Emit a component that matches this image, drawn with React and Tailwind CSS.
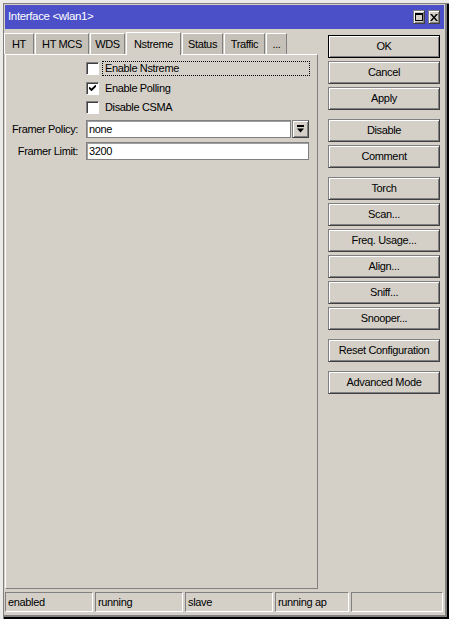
import React, { useState } from 'react';

const font = "font-['Liberation_Sans',Arial,sans-serif]";
const raised = 'border border-t-[#808080] border-l-[#808080] border-b-[#404040] border-r-[#404040] shadow-[inset_1px_1px_#ffffff,inset_-1px_-1px_#808080]';
const sunken = 'border border-t-[#808080] border-l-[#808080] border-b-[#ffffff] border-r-[#ffffff]';

const tabs = [
  { label: 'HT', w: 'w-[30px]' },
  { label: 'HT MCS', w: 'w-[54px]' },
  { label: 'WDS', w: 'w-[35px]' },
  { label: 'Nstreme', w: 'w-[55px]' },
  { label: 'Status', w: 'w-[41px]' },
  { label: 'Traffic', w: 'w-[41px]' },
  { label: '...', w: 'w-[21px]' },
];

const buttonGroups = [
  ['OK', 'Cancel', 'Apply'],
  ['Disable', 'Comment'],
  ['Torch', 'Scan...', 'Freq. Usage...', 'Align...', 'Sniff...', 'Snooper...'],
  ['Reset Configuration'],
  ['Advanced Mode'],
];

const statusCells = [
  { text: 'enabled', w: 'w-[88px]' },
  { text: 'running', w: 'w-[88px]' },
  { text: 'slave', w: 'w-[88px]' },
  { text: 'running ap', w: 'w-[74px]' },
  { text: '', w: 'w-[92px]' },
];

const TitleBar = () => (
  <div className="h-[24px] bg-[#4b50c9] flex items-center pl-[3px] pr-[4px] text-white text-[11.5px]">
    <span className="flex-1">{'Interface <wlan1>'}</span>
    <div className="flex gap-[3px]">
      <div className={`w-[12px] h-[14px] bg-[#d4d0c8] flex items-center justify-center ${raised}`}>
        <svg width="8" height="8" viewBox="0 0 8 8">
          <rect x="0.5" y="0.5" width="7" height="7" fill="none" stroke="#000" />
          <rect x="0" y="0" width="8" height="2" fill="#000" />
        </svg>
      </div>
      <div className={`w-[12px] h-[14px] bg-[#d4d0c8] flex items-center justify-center ${raised}`}>
        <svg width="8" height="7" viewBox="0 0 8 7">
          <path d="M0 0h2l2 2.5 2-2.5h2L5 3.5 8 7H6L4 4.5 2 7H0l3-3.5z" fill="#000" />
        </svg>
      </div>
    </div>
  </div>
);

const Checkbox = ({ checked, label, focused }) => (
  <div className="h-[15px] flex items-center pl-[80px]">
    <div className="w-[13px] h-[13px] bg-white border border-t-[#808080] border-l-[#808080] border-b-[#ffffff] border-r-[#ffffff] shadow-[inset_1px_1px_#404040] flex items-center justify-center">
      {checked && (
        <svg width="7" height="7" viewBox="0 0 7 7">
          <path d="M0 2.5l2.5 2.5L7 0.5" fill="none" stroke="#000" strokeWidth="1.8" />
        </svg>
      )}
    </div>
    <div
      className={`ml-[3px] mr-[7px] flex-1 h-[15px] flex items-center pl-[2px] border ${
        focused ? 'border-dotted border-black' : 'border-transparent'
      }`}
    >
      {label}
    </div>
  </div>
);

const Field = ({ label, value, dropdown }) => (
  <div className="flex items-center h-[18px] pr-[8px]">
    <div className="w-[72px] text-right">{label}</div>
    <div className="ml-[8px] flex-1 h-[18px] bg-white flex items-center pl-[2px] border border-[#808080] shadow-[inset_1px_1px_#a0a0a0]">
      {value}
    </div>
    {dropdown && (
      <div className={`ml-[1px] w-[17px] h-[18px] bg-[#d4d0c8] flex items-center justify-center ${raised}`}>
        <svg width="7" height="8" viewBox="0 0 7 8">
          <rect x="0" y="0" width="7" height="2" fill="#000" />
          <path d="M0 3.5h7L3.5 7.5z" fill="#000" />
        </svg>
      </div>
    )}
  </div>
);

const App = () => {
  const [active] = useState('Nstreme');

  return (
    <div
      className={`w-[449px] h-[619px] bg-[#d4d0c8] ${font} text-[11px] tracking-[-0.35px] text-black flex flex-col pt-[5px] pl-[5px] pr-[5px] pb-[7px] shadow-[inset_3px_3px_#ecebe8,inset_4px_4px_#808080,inset_-2px_-2px_#000000,inset_-4px_-4px_#808080]`}
    >
      <TitleBar />

      <div className="flex flex-1 min-h-0">
        {/* tabs + page */}
        <div className="w-[313px] flex flex-col pt-[3px]">
          <div className="h-[22px] flex items-end gap-[1px] -ml-[1px]">
            {tabs.map((t) =>
              t.label === active ? (
                <div
                  key={t.label}
                  className={`${t.w} h-[23px] -mb-[1px] relative z-10 bg-[#d4d0c8] flex items-start justify-center pt-[3px] border-t border-l border-white border-r border-r-[#808080]`}
                >
                  {t.label}
                </div>
              ) : (
                <div
                  key={t.label}
                  className={`${t.w} h-[21px] bg-[#c5c1b9] flex items-center justify-center border-t border-l border-white border-r border-r-[#808080]`}
                >
                  {t.label}
                </div>
              )
            )}
          </div>

          <div className="flex-1 border-t border-l border-white border-b border-r border-b-[#808080] border-r-[#808080] flex flex-col pt-[6px]">
            <Checkbox label="Enable Nstreme" focused />
            <div className="mt-[5px]">
              <Checkbox label="Enable Polling" checked />
            </div>
            <div className="mt-[4px]">
              <Checkbox label="Disable CSMA" />
            </div>
            <div className="mt-[5px]">
              <Field label="Framer Policy:" value="none" dropdown />
            </div>
            <div className="mt-[4px]">
              <Field label="Framer Limit:" value="3200" />
            </div>
          </div>
        </div>

        {/* action buttons */}
        <div className="ml-[10px] w-[112px] pt-[6px] flex flex-col gap-[9px]">
          {buttonGroups.map((group, i) => (
            <div key={i} className="flex flex-col gap-[3px]">
              {group.map((b) => (
                <div
                  key={b}
                  className={`h-[23px] flex items-center justify-center bg-[#d4d0c8] ${
                    b === 'OK'
                      ? 'border border-black shadow-[inset_1px_1px_#ffffff,inset_-1px_-1px_#808080]'
                      : raised
                  }`}
                >
                  {b}
                </div>
              ))}
            </div>
          ))}
        </div>
      </div>

      {/* status bar */}
      <div className="mt-[3px] h-[20px] flex gap-[2px]">
        {statusCells.map((c, i) => (
          <div key={i} className={`${c.w} h-[20px] flex items-center pl-[2px] ${sunken}`}>
            {c.text}
          </div>
        ))}
      </div>
    </div>
  );
};

export default App;
